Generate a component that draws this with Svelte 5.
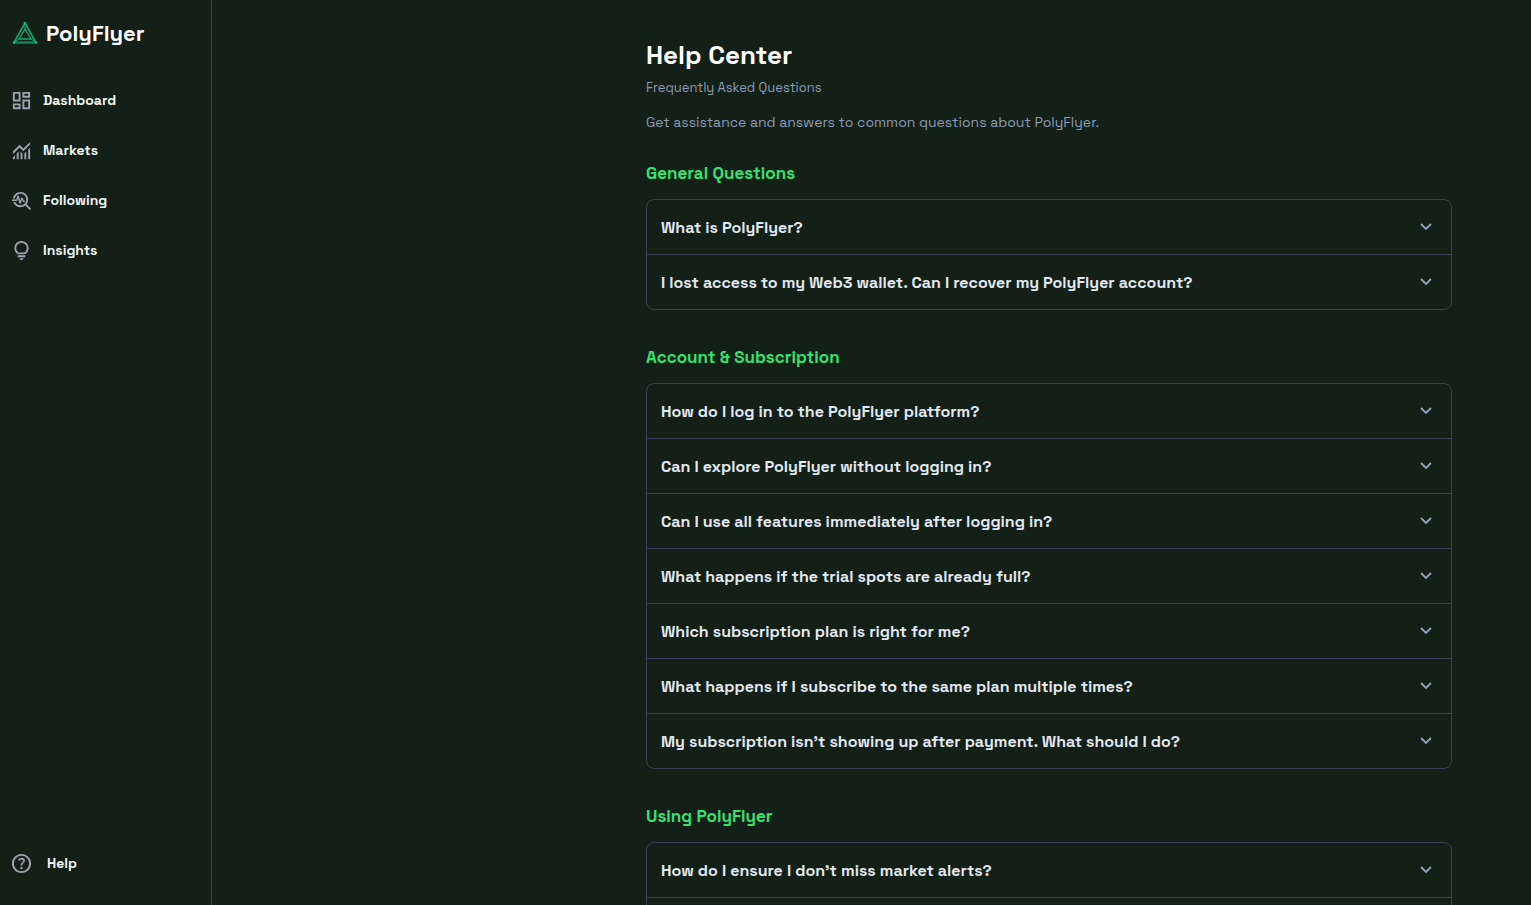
<script>
  const navItems = [
    {
      label: "Dashboard",
      viewBox: "0 -960 960 960",
      path: "M520-600v-240h320v240H520ZM120-440v-400h320v400H120Zm400 320v-400h320v400H520Zm-400 0v-240h320v240H120Zm80-400h160v-240H200v240Zm400 320h160v-240H600v240Zm0-480h160v-80H600v80ZM200-200h160v-80H200v80Z",
    },
    {
      label: "Markets",
      viewBox: "0 -960 960 960",
      path: "M120-120v-80l80-80v160h-80Zm160 0v-240l80-80v320h-80Zm160 0v-320l80 81v239h-80Zm160 0v-239l80-80v319h-80Zm160 0v-400l80-80v480h-80ZM120-327v-113l280-280 160 160 280-280v113L560-447 400-607 120-327Z",
    },
    {
      label: "Following",
      viewBox: "0 0 24 24",
      path: "M22 20.59l-4.69-4.69C18.37 14.55 19 12.85 19 11c0-4.42-3.58-8-8-8-4.08 0-7.44 3.05-7.93 7h2.02C5.57 7.17 8.03 5 11 5c3.31 0 6 2.69 6 6s-2.69 6-6 6c-2.42 0-4.5-1.44-5.45-3.5H3.4C4.45 16.69 7.46 19 11 19c1.85 0 3.55-.63 4.9-1.69L20.59 22 22 20.59zM8.43 9.69L9.65 15h1.64l1.26-3.78.95 2.28h2V12h-1l-1.25-3h-1.54l-1.12 3.37L9.35 7H7.7l-1.25 4H2v1.5h5.55z",
    },
    {
      label: "Insights",
      viewBox: "0 -960 960 960",
      path: "M480-80q-33 0-56.5-23.5T400-160h160q0 33-23.5 56.5T480-80ZM320-200v-80h320v80H320Zm10-120q-69-41-109.5-110T180-580q0-125 87.5-212.5T480-880q125 0 212.5 87.5T780-580q0 81-40.5 150T630-320H330Zm24-80h252q45-32 69.5-79T700-580q0-92-64-156t-156-64q-92 0-156 64t-64 156q0 54 24.5 101t69.5 79Z",
    },
  ];

  const sections = [
    {
      title: "General Questions",
      questions: [
        "What is PolyFlyer?",
        "I lost access to my Web3 wallet. Can I recover my PolyFlyer account?",
      ],
    },
    {
      title: "Account & Subscription",
      questions: [
        "How do I log in to the PolyFlyer platform?",
        "Can I explore PolyFlyer without logging in?",
        "Can I use all features immediately after logging in?",
        "What happens if the trial spots are already full?",
        "Which subscription plan is right for me?",
        "What happens if I subscribe to the same plan multiple times?",
        "My subscription isn’t showing up after payment. What should I do?",
      ],
    },
    {
      title: "Using PolyFlyer",
      questions: [
        "How do I ensure I don’t miss market alerts?",
        "How do I follow a market?",
      ],
    },
  ];

  let openQuestion = $state("");

  function toggle(question) {
    openQuestion = openQuestion === question ? "" : question;
  }
</script>

<div class="app">
  <aside class="sidebar">
    <a class="brand" href="/">
      <svg class="logo" viewBox="0 0 26 24" fill="none" stroke-linejoin="round">
        <path d="M13 2L2 21.5H24Z" stroke="#18a970" stroke-width="1.6" />
        <path d="M13 8L7 18H19Z" stroke="#18a970" stroke-width="1.4" />
        <path d="M13 2V8M2 21.5L7 18M24 21.5L19 18" stroke="#18a970" />
        <path d="M2 21.5H24" stroke="#128558" stroke-width="2" />
        <circle cx="13" cy="2" r="1.3" fill="#18b678" />
        <circle cx="2" cy="21.5" r="1.3" fill="#18b678" />
        <circle cx="24" cy="21.5" r="1.3" fill="#18b678" />
      </svg>
      <span>PolyFlyer</span>
    </a>

    <nav class="nav">
      {#each navItems as item}
        <a class="nav-link" href="/{item.label.toLowerCase()}">
          <svg class="nav-icon" viewBox={item.viewBox} fill="currentColor">
            <path d={item.path} />
          </svg>
          <span>{item.label}</span>
        </a>
      {/each}
    </nav>

    <a class="nav-link help-link" href="/help">
      <svg class="nav-icon" viewBox="0 -960 960 960" fill="currentColor">
        <path
          d="M478-240q21 0 35.5-14.5T528-290q0-21-14.5-35.5T478-340q-21 0-35.5 14.5T428-290q0 21 14.5 35.5T478-240Zm-36-154h74q0-33 7.5-52t42.5-52q26-26 41-49.5t15-56.5q0-56-41-86t-97-30q-57 0-92.5 30T342-618l66 26q5-18 22.5-39t53.5-21q32 0 48 17.5t16 38.5q0 20-12 37.5T506-526q-44 39-54 59t-10 73Zm38 314q-83 0-156-31.5T197-197q-54-54-85.5-127T80-480q0-83 31.5-156T197-763q54-54 127-85.5T480-880q83 0 156 31.5T763-763q54 54 85.5 127T880-480q0 83-31.5 156T763-197q-54 54-127 85.5T480-80Zm0-80q134 0 227-93t93-227q0-134-93-227t-227-93q-134 0-227 93t-93 227q0 134 93 227t227 93Z"
        />
      </svg>
      <span>Help</span>
    </a>
  </aside>

  <main class="main">
    <div class="content">
      <h1>Help Center</h1>
      <p class="subtitle">Frequently Asked Questions</p>
      <p class="intro">
        Get assistance and answers to common questions about PolyFlyer.
      </p>

      {#each sections as section}
        <section class="faq-section">
          <h2>{section.title}</h2>
          <div class="faq-list">
            {#each section.questions as question}
              <button
                class="faq-item"
                aria-expanded={openQuestion === question}
                onclick={() => toggle(question)}
              >
                <span>{question}</span>
                <svg
                  class="chevron"
                  class:open={openQuestion === question}
                  viewBox="0 0 20 20"
                  fill="none"
                >
                  <path
                    d="M5 7L10 12L15 7"
                    stroke="currentColor"
                    stroke-width="1.8"
                  />
                </svg>
              </button>
            {/each}
          </div>
        </section>
      {/each}
    </div>
  </main>
</div>

<style>
  :global(body) {
    background: #132018;
  }

  .app {
    display: flex;
    height: 100vh;
    background: #132018;
    color: #fff;
    font-family: "Space Grotesk", Inter, sans-serif;
  }

  .sidebar {
    box-sizing: border-box;
    width: 212px;
    flex-shrink: 0;
    display: flex;
    flex-direction: column;
    padding: 15px 10px 24px;
    border-right: 1px solid #374151;
  }

  .brand {
    display: flex;
    align-items: center;
    gap: 8px;
    height: 36px;
    padding-left: 2px;
    color: #fff;
    font-size: 22px;
    font-weight: 700;
    text-decoration: none;
  }

  .logo {
    width: 26px;
    height: 24px;
  }

  .nav {
    display: flex;
    flex-direction: column;
    gap: 14px;
    margin-top: 31px;
  }

  .nav-link {
    display: flex;
    align-items: center;
    gap: 10px;
    height: 36px;
    color: #f1f5f2;
    font-size: 14px;
    font-weight: 700;
    text-decoration: none;
  }

  .nav-icon {
    width: 23px;
    height: 23px;
    color: #9ca3af;
  }

  .help-link {
    gap: 14px;
    margin-top: auto;
  }

  .main {
    flex: 1;
    display: flex;
    justify-content: flex-end;
    padding: 36px 79px 0 24px;
    overflow-y: auto;
    scrollbar-width: none;
  }

  .content {
    width: 100%;
    max-width: 806px;
  }

  h1 {
    margin: 0;
    font-size: 26px;
    line-height: 38px;
    font-weight: 700;
  }

  .subtitle {
    margin: 4px 0 0;
    color: #8a9cb5;
    font-size: 13px;
    line-height: 20px;
  }

  .intro {
    margin: 14px 0 0;
    color: #8a9cb5;
    font-size: 14px;
    line-height: 20px;
  }

  .faq-section {
    padding: 26px 0 7px;
  }

  .intro + .faq-section {
    padding-top: 27px;
  }

  h2 {
    margin: 0 0 12px;
    color: #36e272;
    font-size: 17px;
    line-height: 28px;
    font-weight: 700;
  }

  .faq-list {
    border: 1px solid #374151;
    border-radius: 8px;
    overflow: hidden;
  }

  .faq-item {
    box-sizing: border-box;
    display: flex;
    align-items: center;
    justify-content: space-between;
    gap: 16px;
    width: 100%;
    height: 54px;
    padding: 0 15px 0 14px;
    border: none;
    background: none;
    color: #e2e8f0;
    font: inherit;
    font-size: 16px;
    font-weight: 700;
    text-align: left;
    cursor: pointer;
  }

  .faq-item + .faq-item {
    height: 55px;
    border-top: 1px solid #374151;
  }

  .chevron {
    width: 20px;
    height: 20px;
    flex-shrink: 0;
    color: #94a3b8;
  }

  .chevron.open {
    transform: rotate(180deg);
  }
</style>
